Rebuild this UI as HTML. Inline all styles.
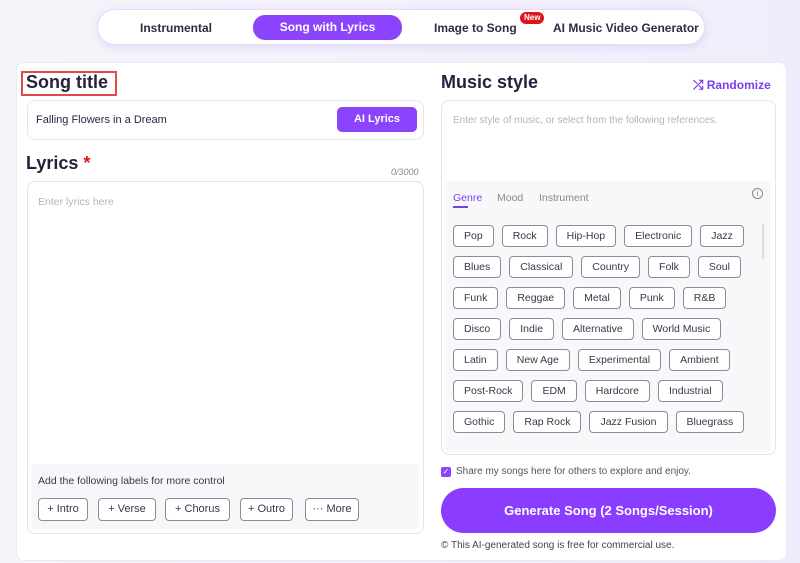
<!DOCTYPE html>
<html><head><meta charset="utf-8"><style>
*{box-sizing:border-box;margin:0;padding:0}
body{width:800px;height:563px;overflow:hidden;background:linear-gradient(90deg,#f6f3fa,#f3f1fb 50%,#efedfb);font-family:"Liberation Sans",sans-serif;color:#2b2540;position:relative}
.abs{position:absolute}
.nav{left:97px;top:9px;width:608px;height:36px;background:#fff;border-radius:18px;box-shadow:0 2px 8px rgba(140,100,230,.18);border:1px solid #e4dcf8}
.nav span{position:absolute;top:11px;font-size:12px;font-weight:bold;color:#2f2b45;white-space:nowrap}
.pill{left:155px;width:149px;height:25px;background:#8b44fb;border-radius:12px;color:#fff!important;text-align:center;line-height:25px;top:5px!important}
.new{background:#e0141c;color:#fff!important;font-size:8px!important;font-weight:bold;border-radius:7px;padding:1px 4px;line-height:10px}
.card{left:16px;top:62px;width:771px;height:499px;background:#fff;border-radius:8px;border:1px solid #ece9f2}
h2{font-size:18px;font-weight:bold;color:#26213d}
.box{border:1px solid #e6e4ec;border-radius:8px;background:#fff}
.chip{display:inline-block;height:22px;line-height:20px;border:1px solid #8d8a9a;border-radius:4px;font-size:10.5px;color:#3a364a;padding:0 10px;margin:0 8px 9px 0;background:#fff}
.tag{position:absolute;top:0;height:23px;line-height:21px;border:1px solid #8d8a9a;border-radius:4px;font-size:11px;color:#3a364a;text-align:center;background:#fff}
</style></head><body>
<div class="abs nav">
<span style="left:42px">Instrumental</span>
<span class="pill">Song with Lyrics</span>
<span style="left:336px">Image to Song</span>
<span class="new" style="left:422px;top:2px">New</span>
<span style="left:455px">AI Music Video Generator</span>
</div>
<div class="abs card"></div>
<div class="abs" style="left:21px;top:71px;width:96px;height:25px;border:2px solid #e04a4a"></div>
<h2 class="abs" style="left:26px;top:72px">Song title</h2>
<div class="abs box" style="left:27px;top:100px;width:397px;height:40px"></div>
<div class="abs" style="left:36px;top:114px;font-size:11px;color:#2b2540">Falling Flowers in a Dream</div>
<div class="abs" style="left:337px;top:107px;width:80px;height:25px;background:#8b44fb;border-radius:5px;color:#fff;font-size:11px;font-weight:bold;text-align:center;line-height:25px">AI Lyrics</div>
<h2 class="abs" style="left:26px;top:153px">Lyrics <span style="color:#e0141c">*</span></h2>
<div class="abs" style="left:391px;top:167px;font-size:9px;color:#888;font-style:italic">0/3000</div>
<div class="abs box" style="left:27px;top:181px;width:397px;height:353px"></div>
<div class="abs" style="left:38px;top:196px;font-size:10.5px;color:#b5b3bd">Enter lyrics here</div>
<div class="abs" style="left:31px;top:464px;width:388px;height:65px;background:#f7f7f9;border-radius:4px"></div>
<div class="abs" style="left:38px;top:475px;font-size:10.5px;color:#3a364a">Add the following labels for more control</div>
<div class="abs" style="left:0;top:498px;width:420px;height:24px">
<span class="tag" style="left:38px;width:50px">+ Intro</span>
<span class="tag" style="left:98px;width:58px">+ Verse</span>
<span class="tag" style="left:165px;width:65px">+ Chorus</span>
<span class="tag" style="left:240px;width:53px">+ Outro</span>
<span class="tag" style="left:305px;width:54px">··· More</span>
</div>

<h2 class="abs" style="left:441px;top:72px">Music style</h2>
<div class="abs" style="left:693px;top:77px;font-size:12px;color:#7a3df0;font-weight:bold"><span style="font-size:13px">⤮</span> Randomize</div>
<div class="abs box" style="left:441px;top:100px;width:335px;height:355px"></div>
<div class="abs" style="left:453px;top:115px;font-size:10px;color:#b5b3bd">Enter style of music, or select from the following references.</div>
<div class="abs" style="left:445px;top:181px;width:326px;height:271px;background:#f8f8fa;border-radius:4px"></div>
<div class="abs" style="left:453px;top:192px;font-size:10.5px;color:#7a3df0">Genre</div>
<div class="abs" style="left:453px;top:206px;width:15px;height:2px;background:#7a3df0"></div>
<div class="abs" style="left:497px;top:192px;font-size:10.5px;color:#888">Mood</div>
<div class="abs" style="left:539px;top:192px;font-size:10.5px;color:#888">Instrument</div>
<div class="abs" style="left:752px;top:188px;width:11px;height:11px;border:1px solid #888;border-radius:50%;font-size:8px;text-align:center;line-height:9px;color:#888">i</div>
<div class="abs" style="left:762px;top:224px;width:2px;height:35px;background:#ddd"></div>
<div class="abs" style="left:453px;top:225px;width:308px;line-height:0">
<span class="chip">Pop</span><span class="chip">Rock</span><span class="chip">Hip-Hop</span><span class="chip">Electronic</span><span class="chip">Jazz</span>
<span class="chip">Blues</span><span class="chip">Classical</span><span class="chip">Country</span><span class="chip">Folk</span><span class="chip">Soul</span>
<span class="chip">Funk</span><span class="chip">Reggae</span><span class="chip">Metal</span><span class="chip">Punk</span><span class="chip">R&amp;B</span>
<span class="chip">Disco</span><span class="chip">Indie</span><span class="chip">Alternative</span><span class="chip">World Music</span>
<span class="chip">Latin</span><span class="chip">New Age</span><span class="chip">Experimental</span><span class="chip">Ambient</span>
<span class="chip">Post-Rock</span><span class="chip">EDM</span><span class="chip">Hardcore</span><span class="chip">Industrial</span>
<span class="chip">Gothic</span><span class="chip">Rap Rock</span><span class="chip">Jazz Fusion</span><span class="chip">Bluegrass</span>
</div>
<div class="abs" style="left:441px;top:467px;width:10px;height:10px;background:#8b44fb;border-radius:2px;color:#fff;font-size:8px;line-height:10px;text-align:center">✓</div>
<div class="abs" style="left:456px;top:466px;font-size:10px;color:#555">Share my songs here for others to explore and enjoy.</div>
<div class="abs" style="left:441px;top:488px;width:335px;height:45px;background:#8b3dff;border-radius:23px;color:#fff;font-size:13px;font-weight:bold;text-align:center;line-height:45px">Generate Song (2 Songs/Session)</div>
<div class="abs" style="left:441px;top:540px;font-size:10px;color:#444">© This AI-generated song is free for commercial use.</div>
</body></html>
